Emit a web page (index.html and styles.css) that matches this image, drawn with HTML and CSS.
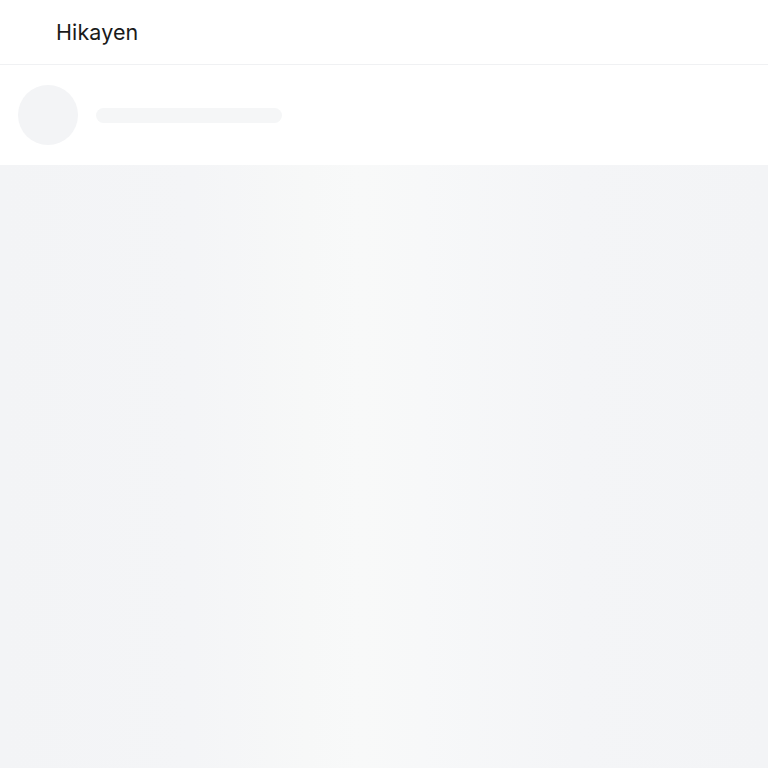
FILE: index.html
```html
<!DOCTYPE html>
<html>
<head>
<meta charset="utf-8">
<link rel="stylesheet" href="styles.css">
</head>
<body>
<header class="topbar"><h1 class="title">Hikayen</h1></header>
<section class="skeleton-row">
  <div class="avatar"></div>
  <div class="line"></div>
</section>
<main class="feed"></main>
</body>
</html>
```
FILE: styles.css
```css
html, body { margin: 0; padding: 0; height: 100%; }
body { font-family: Inter, "Noto Sans", "Liberation Sans", sans-serif; background: #fff; display: flex; flex-direction: column; }
.topbar { height: 65px; box-sizing: border-box; border-bottom: 1px solid #f0f1f3; display: flex; align-items: center; padding-left: 56px; }
.title { margin: 0; font-size: 21.5px; font-weight: 400; color: #1a1a1a; letter-spacing: 0.1px; }
.skeleton-row { height: 100px; display: flex; align-items: center; padding-left: 18px; gap: 18px; }
.avatar { width: 60px; height: 60px; border-radius: 50%; background: #f3f4f6; }
.line { width: 186px; height: 15px; border-radius: 8px; background: #f5f6f7; }
.feed { flex: 1; background: linear-gradient(90deg, #f3f4f6 0%, #f4f5f7 25%, #f7f8f8 40%, #f8f9f9 47%, #f7f8f9 55%, #f4f5f7 75%, #f3f4f6 100%); }
```
